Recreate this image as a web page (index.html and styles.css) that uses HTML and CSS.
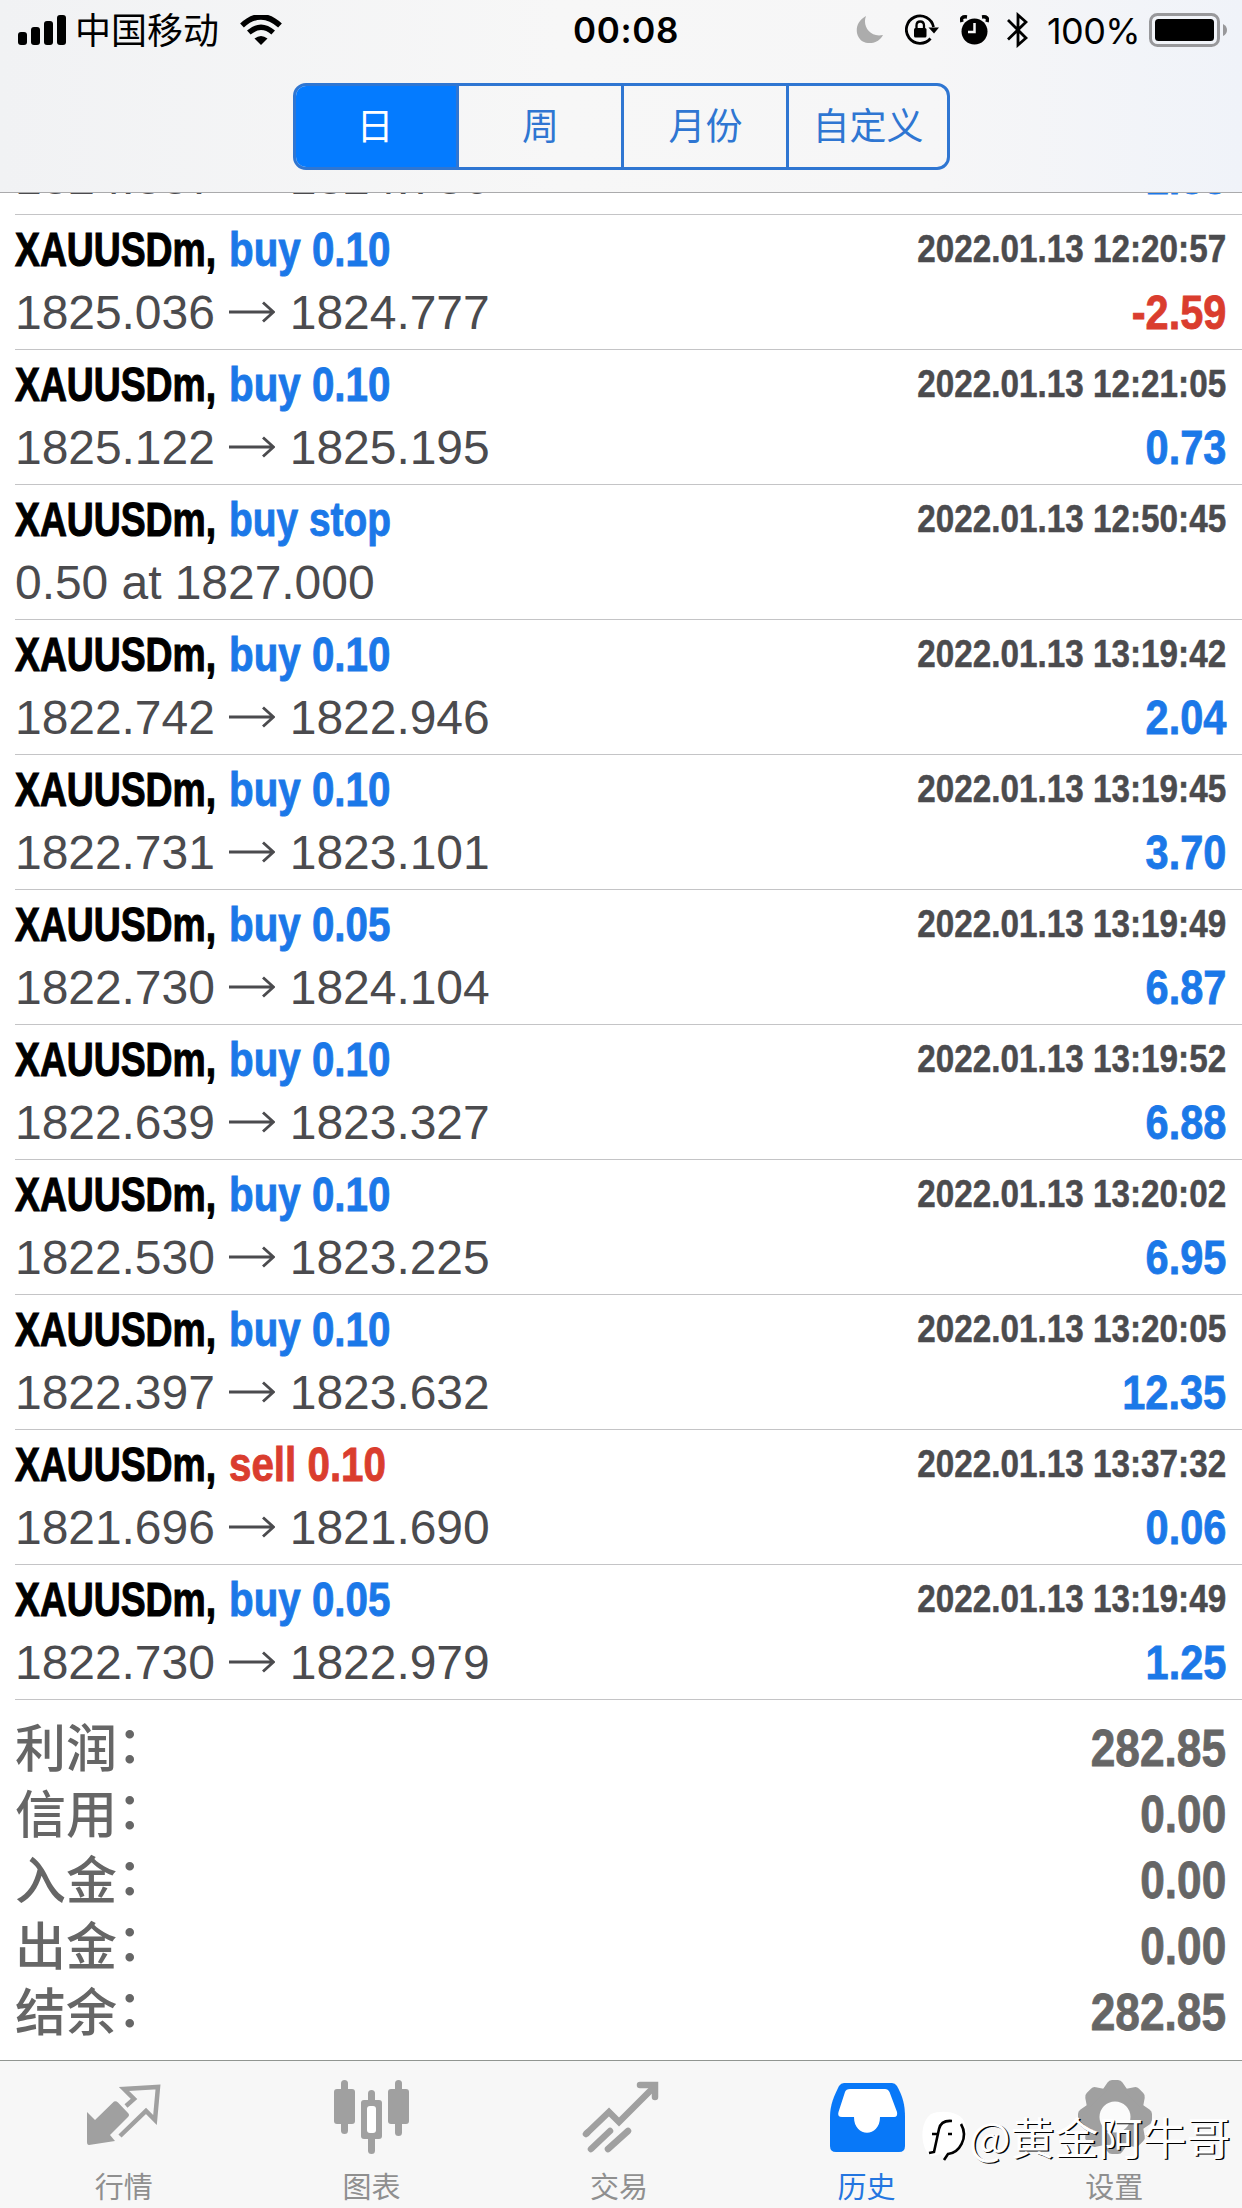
FILE: index.html
```html
<!DOCTYPE html>
<html lang="zh-CN">
<head>
<meta charset="utf-8">
<title>历史</title>
<link rel="stylesheet" href="styles.css">
</head>
<body>
<svg class="defs" width="0" height="0"><symbol id="arrow" viewBox="0 0 46 22"><path d="M0 11H44M34 1.5L44.500 11L34 20.500" fill="none" stroke="#4b4b4e" stroke-width="2.900"/></symbol></svg>
<div class="screen">
  <header class="header">
    <div class="status">
      <div class="status-left">
        <svg width="48" height="30" viewBox="0 0 48 30"><rect x="0" y="17" width="9" height="13" rx="3"/><rect x="13" y="12" width="9" height="18" rx="3"/><rect x="26" y="6" width="9" height="24" rx="3"/><rect x="39" y="0" width="9" height="30" rx="3"/></svg>
        <span class="carrier">中国移动</span>
        <svg width="42" height="30" viewBox="0 0 42 30"><path d="M2 10.500Q21 -7 40 10.500" fill="none" stroke="#000" stroke-width="5.500"/><path d="M8.800 17.500Q21 7 33.200 17.500" fill="none" stroke="#000" stroke-width="5.500"/><path d="M14.500 23.500Q21 18.500 27.500 23.500L21 30Z"/></svg>
      </div>
      <span class="clock">00:08</span>
      <div class="status-right">
        <svg class="moon" width="28" height="27" viewBox="0 0 28 27"><path d="M10 0C6 10 14 22 27 19C23 27 14 28.500 8 26C-1 22 -3 7 10 0Z" fill="#acacac"/></svg>
        <svg class="lock" width="34" height="31" viewBox="0 0 34 31"><path d="M28.500 13A13.700 13.700 0 1 0 25.500 24.500" fill="none" stroke="#000" stroke-width="2.800"/><path d="M23.500 13.500H34L29 19.500Z"/><rect x="9" y="14" width="12.500" height="9.500" rx="1.500"/><path d="M11.500 15V11.500Q11.500 7.500 15.200 7.500T19 11.500V15" fill="none" stroke="#000" stroke-width="2.300"/></svg>
        <svg class="alarm" width="29" height="30" viewBox="0 0 29 30"><circle cx="14.500" cy="16.500" r="13"/><path d="M14.500 8V17H8" fill="none" stroke="#f5f6f7" stroke-width="2.500"/><path d="M2 7Q0 1 7 2M22 2Q29 1 27 7" fill="none" stroke="#000" stroke-width="3.500"/></svg>
        <svg class="bt" width="21" height="36" viewBox="0 0 21 36"><path d="M1 8L19 26L11 33V3L19 10L1 27.500" fill="none" stroke="#000" stroke-width="2.800"/></svg>
        <span class="percent">100%</span>
        <svg width="78" height="34" viewBox="0 0 78 34"><rect x="1.500" y="1.500" width="68" height="31" rx="7" fill="none" stroke="#98989b" stroke-width="3"/><rect x="6" y="6" width="59" height="22" rx="3.500"/><path d="M74 11Q78 13 78 17T74 23Z" fill="#98989b"/></svg>
      </div>
    </div>
    <nav class="segments"><span class="seg on">日</span><span class="seg">周</span><span class="seg">月份</span><span class="seg">自定义</span></nav>
  </header>

  <main class="history">
    <section class="deals">
      <article class="deal clipped"><b class="name"><span class="sym">XAUUSDm,</span><span class="buy">buy 0.10</span></b><time>2022.01.13 12:20:40</time><span class="price">1824.887<svg><use href="#arrow"/></svg>1824.786</span><b class="value">1.88</b></article>
      <article class="deal"><b class="name"><span class="sym">XAUUSDm,</span><span class="buy">buy 0.10</span></b><time>2022.01.13 12:20:57</time><span class="price">1825.036<svg><use href="#arrow"/></svg>1824.777</span><b class="value loss">-2.59</b></article>
      <article class="deal"><b class="name"><span class="sym">XAUUSDm,</span><span class="buy">buy 0.10</span></b><time>2022.01.13 12:21:05</time><span class="price">1825.122<svg><use href="#arrow"/></svg>1825.195</span><b class="value">0.73</b></article>
      <article class="deal"><b class="name"><span class="sym">XAUUSDm,</span><span class="buy stop">buy stop</span></b><time>2022.01.13 12:50:45</time><span class="price">0.50 at 1827.000</span></article>
      <article class="deal"><b class="name"><span class="sym">XAUUSDm,</span><span class="buy">buy 0.10</span></b><time>2022.01.13 13:19:42</time><span class="price">1822.742<svg><use href="#arrow"/></svg>1822.946</span><b class="value">2.04</b></article>
      <article class="deal"><b class="name"><span class="sym">XAUUSDm,</span><span class="buy">buy 0.10</span></b><time>2022.01.13 13:19:45</time><span class="price">1822.731<svg><use href="#arrow"/></svg>1823.101</span><b class="value">3.70</b></article>
      <article class="deal"><b class="name"><span class="sym">XAUUSDm,</span><span class="buy">buy 0.05</span></b><time>2022.01.13 13:19:49</time><span class="price">1822.730<svg><use href="#arrow"/></svg>1824.104</span><b class="value">6.87</b></article>
      <article class="deal"><b class="name"><span class="sym">XAUUSDm,</span><span class="buy">buy 0.10</span></b><time>2022.01.13 13:19:52</time><span class="price">1822.639<svg><use href="#arrow"/></svg>1823.327</span><b class="value">6.88</b></article>
      <article class="deal"><b class="name"><span class="sym">XAUUSDm,</span><span class="buy">buy 0.10</span></b><time>2022.01.13 13:20:02</time><span class="price">1822.530<svg><use href="#arrow"/></svg>1823.225</span><b class="value">6.95</b></article>
      <article class="deal"><b class="name"><span class="sym">XAUUSDm,</span><span class="buy">buy 0.10</span></b><time>2022.01.13 13:20:05</time><span class="price">1822.397<svg><use href="#arrow"/></svg>1823.632</span><b class="value">12.35</b></article>
      <article class="deal"><b class="name"><span class="sym">XAUUSDm,</span><span class="buy sell">sell 0.10</span></b><time>2022.01.13 13:37:32</time><span class="price">1821.696<svg><use href="#arrow"/></svg>1821.690</span><b class="value">0.06</b></article>
      <article class="deal"><b class="name"><span class="sym">XAUUSDm,</span><span class="buy">buy 0.05</span></b><time>2022.01.13 13:19:49</time><span class="price">1822.730<svg><use href="#arrow"/></svg>1822.979</span><b class="value">1.25</b></article>
    </section>
    <section class="summary">
      <div class="total"><span>利润<i>：</i></span><b>282.85</b></div>
      <div class="total"><span>信用<i>：</i></span><b>0.00</b></div>
      <div class="total"><span>入金<i>：</i></span><b>0.00</b></div>
      <div class="total"><span>出金<i>：</i></span><b>0.00</b></div>
      <div class="total"><span>结余<i>：</i></span><b>282.85</b></div>
    </section>
  </main>

  <nav class="tabs">
    <a class="tab"><svg width="80" height="84" viewBox="0 0 80 84"><path d="M3 19L11 27L30 8.500Q32 7.500 34 9.500L44 20Q46 22 44 24L26 42L31 48L5 52Q3 52 3 49Z" transform="translate(0 12)" fill="#a0a0a0"/><path d="M43 22L51 15L41 5L75 3L72 36L63 27L37 52" transform="translate(-1 3)" fill="none" stroke="#a0a0a0" stroke-width="4.500"/></svg><span>行情</span></a>
    <a class="tab"><svg width="80" height="84" viewBox="0 0 80 84" fill="#a0a0a0"><rect x="10" y="-1" width="7" height="54" rx="3.500"/><rect x="3" y="8" width="21" height="35" rx="3"/><rect x="37" y="9" width="7" height="64" rx="3.500"/><rect x="30" y="19" width="21" height="39" rx="3"/><rect x="36" y="25" width="9" height="27" rx="3" fill="#fff"/><rect x="64" y="-1" width="7" height="56" rx="3.500"/><rect x="57" y="8" width="21" height="35" rx="3"/></svg><span>图表</span></a>
    <a class="tab"><svg width="80" height="84" viewBox="0 0 80 84" fill="none" stroke="#a0a0a0" stroke-width="6.500"><path d="M7 53L30 31L40 41L75 6" stroke-linejoin="miter"/><path d="M7 53L8 52M61 4H76V16M12 68L31 50M29 68L49 50" stroke-linecap="round"/></svg><span>交易</span></a>
    <a class="tab active"><svg width="80" height="84" viewBox="0 0 80 84"><path d="M17 2H65Q68 2 70 5C76 16 78 24 78 36V65Q78 71 72 71H9Q3 71 3 65V36C3 24 7 15 12 5Q14 2 17 2Z" fill="#0878f8"/><path d="M23 8H58Q61 8 62.500 11L70 31Q71 36 67 36H53C53 57 27 57 27 36H15Q10 36 11.500 31L18 11Q19 8 23 8Z" fill="#fff"/></svg><span>历史</span></a>
    <a class="tab"><svg width="80" height="84" viewBox="0 0 80 84"><g transform="translate(41 36)" fill="#a0a0a0"><circle r="29"/><g id="teeth"><path id="tooth" d="M-14 -25L-7.500 -34.500Q-6 -37 -3 -37H3Q6 -37 7.500 -34.500L14 -25Z"/><use href="#tooth" transform="rotate(45)"/><use href="#tooth" transform="rotate(90)"/><use href="#tooth" transform="rotate(135)"/></g><use href="#teeth" transform="rotate(180)"/><circle r="15.500" fill="#fbfbfb"/></g></svg><span>设置</span></a>
  </nav>

  <div class="watermark"><svg width="48" height="50" viewBox="0 0 48 50"><path d="M8 44C-2 32 0 10 10 3C20 -1 38 0 43 10C50 25 43 40 27 43L24 48L19 43Q12 46 8 44Z" fill="#fff"/><path d="M8 42L13 41L18 18Q20 9 31 10M11 23H18M27 23H31M40 13C48 27 38 42 27 43L23 49" fill="none" stroke="#000" stroke-width="2.600"/></svg><span>@黄金阿牛哥</span></div>
</div>
</body>
</html>
```
FILE: styles.css
```css
* { box-sizing: border-box; }
body { margin: 0; background: #fff; font-family: "Liberation Sans", "Noto Sans CJK SC", sans-serif; }
.defs { display: block; }
.screen { position: relative; width: 1242px; height: 2208px; display: flex; flex-direction: column; overflow: hidden; background: #fff; }

.header { height: 193px; flex: none; border-bottom: 1px solid #aaaaac; background: linear-gradient(90deg, #f1f2f4, #f7f7f7 45%, #f6f6f7 75%, #f0f3f9); }
.status { height: 60px; padding: 0 15px 2px 18px; display: grid; grid-template-columns: 1fr auto 1fr; align-items: center; }
.status-left, .status-right { display: flex; align-items: center; }
.status-right { justify-content: flex-end; }
.carrier { margin: 0 21px 0 9px; font: 36px/58px "Noto Sans CJK SC", sans-serif; }
.status-left .carrier { line-height: 54px; padding-bottom: 4px; }
.clock { padding-left: 7px; font: 600 35px/58px Inter, sans-serif; letter-spacing: .6px; }
.percent { margin: 3px 9px 0 19px; font: 36px/56px Inter, sans-serif; letter-spacing: -.6px; }
.lock { margin-left: 20px; }
.alarm { margin-left: 21px; }
.bt { margin-left: 18px; }
.moon { margin-right: 1px; }

.segments { width: 657px; height: 87px; margin: 23px 0 0 293px; display: grid; grid-template-columns: 161px 165px 165px 1fr; border: 3px solid #2f76d2; border-radius: 13px; overflow: hidden; }
.seg { border-left: 3px solid #2f76d2; color: #2f76d2; font: 400 37px/77px "Noto Sans CJK SC", sans-serif; text-align: center; }
.seg + .seg { margin-left: -1px; }
.seg.on { margin: -3px 0 -3px -3px; border: 0; background: #047bff; color: #fff; line-height: 83px; }

.history { flex: 1; overflow: hidden; }
.deals { margin-left: 15px; }
.deal { height: 135px; padding: 2px 16px 0 0; display: grid; grid-template: 64px 64px / 1fr auto; border-bottom: 1px solid #c4c4c6; line-height: 64px; }
.clipped { margin-top: -113px; }
.name { padding-top: 1px; display: flex; font-size: 48px; white-space: nowrap; }
.sym { width: 214px; transform: scaleX(.777); transform-origin: 0 50%; -webkit-text-stroke: 1.1px #000; }
.buy { color: #1b78e8; transform: scaleX(.84); transform-origin: 0 50%; -webkit-text-stroke: .9px; }
.stop { transform: scaleX(.81); }
.sell, .deal .loss { color: #da3d2e; }
time { color: #4b4b4e; font-size: 39px; font-weight: bold; transform: scaleX(.853); transform-origin: 100% 50%; justify-self: end; -webkit-text-stroke: .5px; }
.price { color: #4b4b4e; font-size: 48px; white-space: nowrap; letter-spacing: -.05px; }
.price svg { width: 46px; height: 22px; margin: 0 15px 6px 14px; }
.value { color: #1b78e8; font-size: 48px; transform: scaleX(.865); transform-origin: 100% 50%; justify-self: end; -webkit-text-stroke: .8px; }

.summary { padding: 16px 16px 0 15px; }
.total { height: 66px; display: flex; justify-content: space-between; color: #666; line-height: 66px; }
.total span { display: flex; font: 500 51px/58px "Noto Sans CJK SC", sans-serif; }
.total i { font-style: normal; line-height: 50px; }
.total b { font-size: 51px; transform: scaleX(.867); transform-origin: 100% 50%; -webkit-text-stroke: .8px; }

.tabs { height: 148px; flex: none; padding-right: 4px; display: grid; grid-template-columns: repeat(5, 1fr); border-top: 1px solid #919591; background: #f7f7f7; }
.tab { padding-top: 20px; display: flex; flex-direction: column; align-items: center; color: #8f8f8f; }
.tab svg { overflow: visible; }
.tab span { font: 29px/40px "Noto Sans CJK SC", sans-serif; }
.tab.active { color: #2476e0; }

.watermark { position: absolute; left: 921px; top: 2110px; display: flex; align-items: center; color: #fff; font: 44px/52px "Noto Sans CJK SC", sans-serif; text-shadow: 1.500px 1px 0 #000; white-space: nowrap; }
```
